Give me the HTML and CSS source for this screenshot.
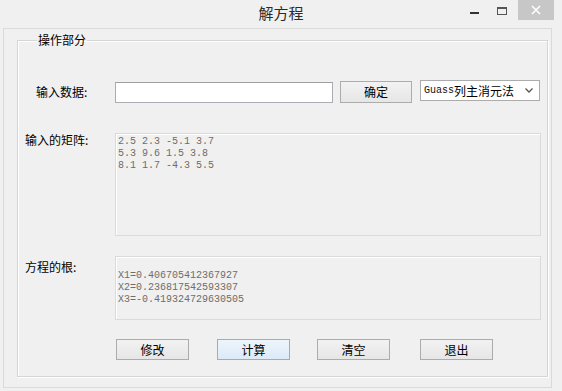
FILE: index.html
```html
<!DOCTYPE html>
<html>
	<head>
		<meta charset="UTF-8">
		<title>解方程</title>
		<link rel="stylesheet" href="styles.css">
	</head>
	<body>
		<div class="window">
			<div class="titlebar">
				<span class="title">解方程</span>
				<div class="controls">
					<span class="btnMin"></span>
					<span class="btnMax"></span>
					<span class="btnClose">
						<svg width="10" height="10" viewBox="0 0 10 10"><path d="M1 1L9 9M9 1L1 9" stroke="#fff" stroke-width="1.6"/></svg>
					</span>
				</div>
			</div>
			<div class="client">
				<fieldset class="group">
					<legend>操作部分</legend>
					<div class="row rowInput">
						<label class="lbl lblInput">输入数据:</label>
						<div class="inputLine">
							<input type="text" class="txt">
							<button class="btn btnOk">确定</button>
							<div class="select">
								<span class="latin">Guass</span><span>列主消元法</span>
								<svg class="arrow" width="8" height="5" viewBox="0 0 8 5"><path d="M0.5 0.5L4 4L7.5 0.5" fill="none" stroke="#555" stroke-width="1.3"/></svg>
							</div>
						</div>
					</div>
					<div class="row rowMatrix">
						<label class="lbl">输入的矩阵:</label>
						<div class="box boxMatrix">2.5 2.3 -5.1 3.7
5.3 9.6 1.5 3.8
8.1 1.7 -4.3 5.5</div>
					</div>
					<div class="row rowRoots">
						<label class="lbl lblRoots">方程的根:</label>
						<div class="box boxRoots">
X1=0.406705412367927
X2=0.236817542593307
X3=-0.419324729630505</div>
					</div>
					<div class="actions">
						<button class="btn">修改</button>
						<button class="btn btnFocus">计算</button>
						<button class="btn">清空</button>
						<button class="btn">退出</button>
					</div>
				</fieldset>
			</div>
		</div>
	</body>
</html>
```

FILE: styles.css
```css
*{box-sizing: border-box;}
body{margin: 0; padding: 0; background: #f0f0f0; font: 12px/14px "Noto Sans CJK SC", "Liberation Sans", sans-serif; color: #000;}

.window{width: 562px; height: 391px; overflow: hidden; padding: 0 10px 3px 3px; display: flex; flex-direction: column; background: #f0f0f0;}

.titlebar{height: 28px; position: relative; display: flex; justify-content: center; align-items: center; margin-left: -3px; margin-right: -10px;}
.titlebar .title{font-size: 15px; color: #2b2b2b; padding-bottom: 2px;}
.controls{position: absolute; top: 0; right: 8px; display: flex; align-items: flex-start;}
.btnMin{width: 9px; height: 2px; background: #333; margin: 12px 18px 0 0;}
.btnMax{width: 10px; height: 8px; border: 1px solid #555; border-top-width: 2px; margin: 7px 11px 0 0;}
.btnClose{width: 36px; height: 20px; background: #c7c7c7; display: flex; align-items: center; justify-content: center;}

.client{flex: 1; border: 1px solid #dadada; padding: 0 3px 10px 13px; display: flex;}

.group{flex: 1; margin: 4px 0 0 0; padding: 0 6px 0 7px; border: 1px solid #d5d5d5; box-shadow: inset 1px 1px 0 #fff, 1px 1px 0 #fff; min-width: 0;}
.group legend{padding: 0 1px; margin-left: 12px; line-height: 14px;}

.row{display: grid; grid-template-columns: 90px 1fr; align-items: start;}
.lbl{display: block; line-height: 14px; padding-top: 1px;}

.rowInput{margin-top: 33px;}
.lblInput{padding-left: 11px; padding-top: 5px;}
.inputLine{display: flex; align-items: flex-start;}
.txt{width: 218px; height: 21px; margin: 2px 0 0 0; border: 1px solid #abadb3; border-top-color: #a0a0a0; background: #fff; padding: 0 3px; font: inherit; outline: none;}
.btn{width: 73px; height: 21px; padding: 0; border: 1px solid #acacac; background: linear-gradient(#f2f2f2, #e6e6e6); font: 12px/14px "Noto Sans CJK SC", sans-serif; color: #000;}
.btnOk{width: 72px; height: 22px; margin: 1px 0 0 7px;}
.select{width: 120px; height: 21px; margin-left: 8px; border: 1px solid #acacac; background: #fff; display: flex; align-items: center; padding: 0 0 0 3px; white-space: nowrap;}
.select .latin{font: 10px "Liberation Mono", monospace; color: #111;}
.select .arrow{margin-left: auto; margin-right: 6px;}

.box{border: 1px solid #dadada; box-shadow: inset 1px 1px 0 #fff; background: #f0f0f0; font: 10px/12px "Liberation Mono", monospace; color: #6d6d6d; white-space: pre; padding: 2px 2px; overflow: hidden;}
.rowMatrix{margin-top: 30px;}
.rowMatrix .lbl{padding-top: 0;}
.boxMatrix{height: 103px;}
.rowRoots{margin-top: 20px;}
.lblRoots{padding-top: 4px;}
.boxRoots{height: 64px; padding-top: 1px;}

.actions{display: flex; margin: 19px 0 0 91px;}
.actions .btn + .btn{margin-left: 28px;}
.actions .btn:nth-child(3){margin-left: 27px;}
.actions .btn:nth-child(4){margin-left: 30px;}
.btnFocus{border-color: #7eb4ea; background: linear-gradient(#edf5fc, #dceaf7);}
```
